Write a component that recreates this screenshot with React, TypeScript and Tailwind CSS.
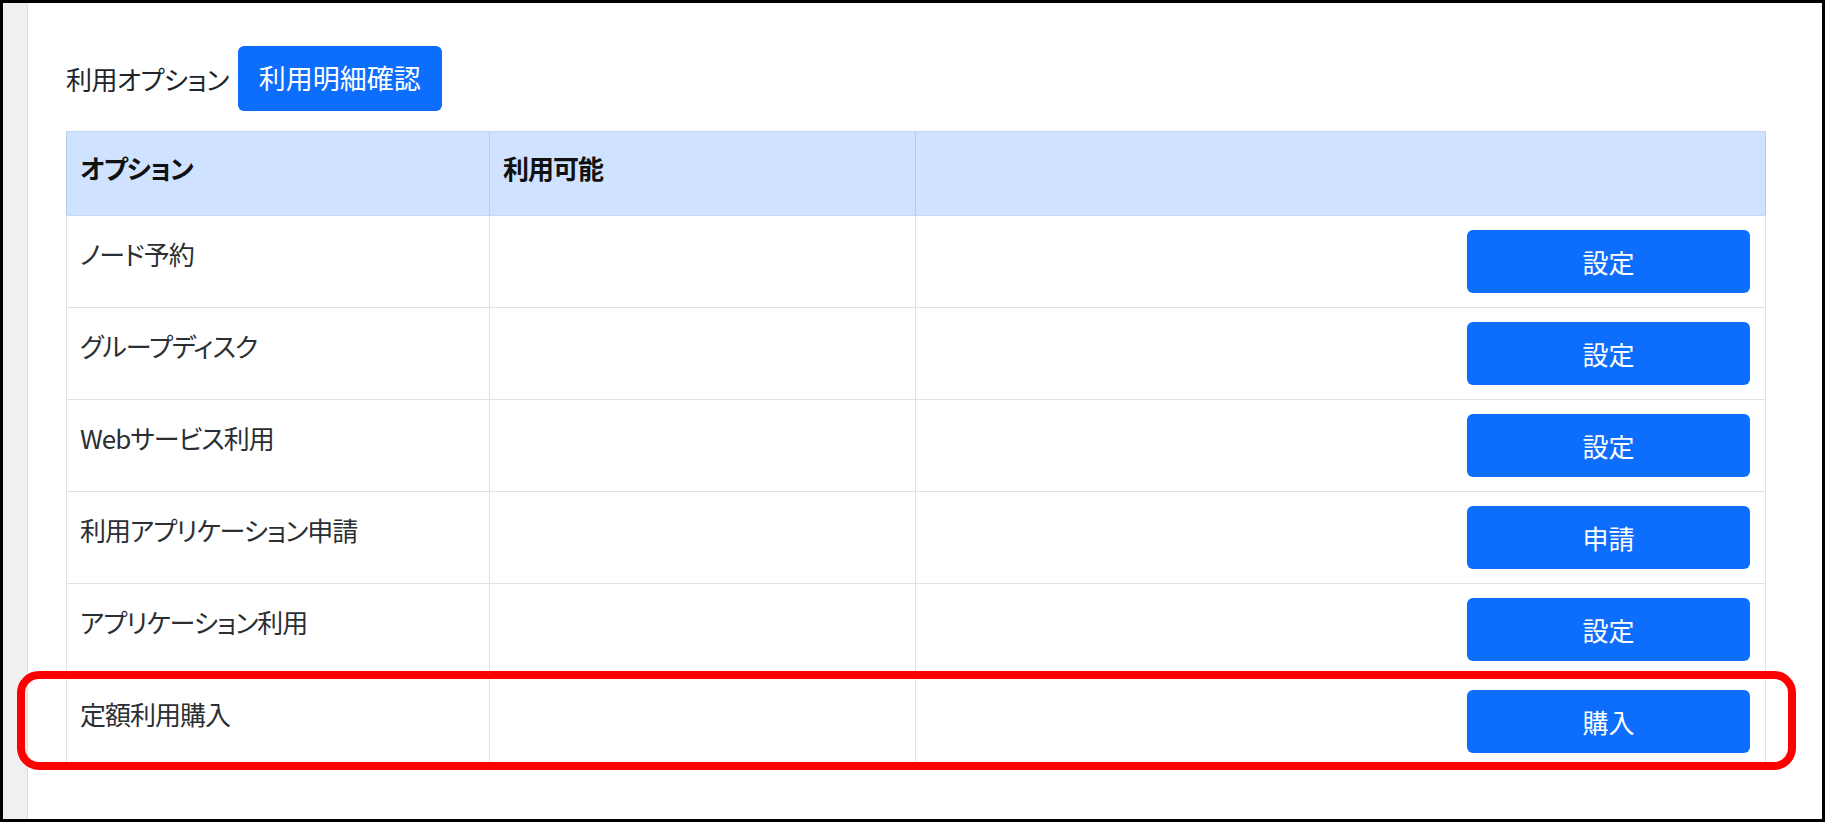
import React from "react";

type Option = {
  name: string;
  action: string;
};

const options: Option[] = [
  { name: "ノード予約", action: "設定" },
  { name: "グループディスク", action: "設定" },
  { name: "Webサービス利用", action: "設定" },
  { name: "利用アプリケーション申請", action: "申請" },
  { name: "アプリケーション利用", action: "設定" },
  { name: "定額利用購入", action: "購入" },
];

const font =
  "font-['Noto_Sans_CJK_JP','Noto_Sans',sans-serif] [font-feature-settings:'palt']";

function OptionRow({ option, highlight }: { option: Option; highlight: boolean }) {
  return (
    <div className="relative flex h-[92px] border-b border-[#dee2e6]">
      <div className="w-[423px] border-l border-[#dee2e6] pl-[13px] pt-[18px] text-[26px] leading-[40px] tracking-[-1px] text-[#2b2f33]">
        {option.name}
      </div>
      <div className="w-[426px] border-l border-[#dee2e6]" />
      <div className="flex flex-1 justify-end border-x border-[#dee2e6] pr-[15px] pt-[14px]">
        <button className="h-[63px] w-[283px] rounded-[6px] bg-[#0d6efd] text-[26px] text-white">
          {option.action}
        </button>
      </div>
      {highlight && (
        <div className="pointer-events-none absolute -top-[5px] -bottom-[3px] -left-[49px] -right-[30px] rounded-[22px] border-[8px] border-[#ff0000]" />
      )}
    </div>
  );
}

export default function App() {
  return (
    <div className={`flex h-[822px] w-[1825px] overflow-hidden border-[3px] border-black bg-white ${font}`}>
      <div className="w-[25px] shrink-0 border-r border-[#e0e0e0] bg-[#f0f0f0]" />
      <div className="flex-1 pl-[38px] pt-[43px]">
        <div className="flex items-center gap-[9px]">
          <span className="text-[26px] tracking-[-0.5px] text-[#212529]">利用オプション</span>
          <button className="h-[65px] rounded-[6px] bg-[#0d6efd] px-[21px] text-[27px] text-white">
            利用明細確認
          </button>
        </div>

        <div className="mt-[20px] w-[1700px]">
          <div className="flex h-[85px] border-y border-[#c5d7f2] bg-[#cfe2ff] text-[26px] font-bold leading-[40px] tracking-[-1px] text-[#111]">
            <div className="w-[423px] border-l border-[#bacbe6] pl-[13px] pt-[16px]">オプション</div>
            <div className="w-[426px] border-l border-[#bacbe6] pl-[13px] pt-[16px]">利用可能</div>
            <div className="flex-1 border-x border-[#bacbe6]" />
          </div>
          {options.map((o, i) => (
            <OptionRow key={o.name} option={o} highlight={i === options.length - 1} />
          ))}
        </div>
      </div>
    </div>
  );
}
